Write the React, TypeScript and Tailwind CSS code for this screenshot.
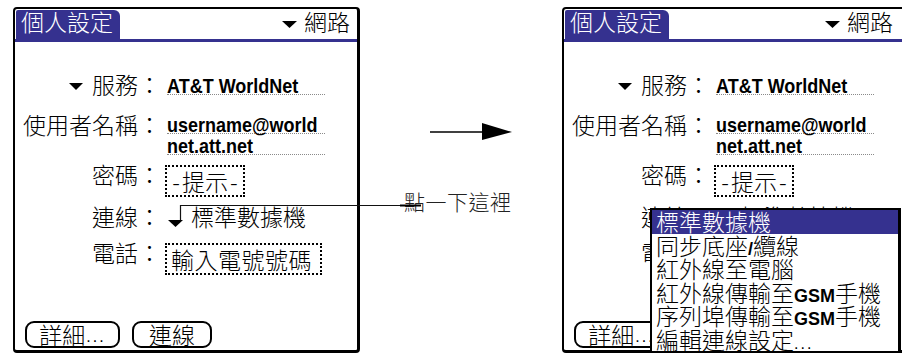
import React from "react";

function Tri({ className }: { className?: string }) {
  return (
    <svg width="14" height="7" viewBox="0 0 14 7" className={"shrink-0 " + (className ?? "")}>
      <polygon points="0,0 14,0 7,7" fill="#000" />
    </svg>
  );
}

const latin = "font-['Liberation_Sans',sans-serif] font-bold text-[18px]";

function Val({ children }: { children: React.ReactNode }) {
  return <span className="inline-block origin-bottom scale-y-[1.15] translate-y-[1px]">{children}</span>;
}

function Screen({ right }: { right?: boolean }) {
  return (
    <div className="relative shrink-0 w-[347px] h-[346px] border-l-2 border-t-2 border-r-[3px] border-b-[3px] border-black rounded-[4px] flex flex-col text-[23px] leading-[23px] font-light text-black bg-white">
      {/* title bar */}
      <div className={"flex h-[33px] border-b-[3px] border-[#35318f] " + (right ? "pr-[13px]" : "pr-[7px]")}>
        <div className="ml-[1px] mt-[1px] w-[104px] h-[29px] bg-[#35318f] rounded-tr-[6px] rounded-tl-[2px] pl-[5px] text-white whitespace-nowrap">
          個人設定
        </div>
        <div className="ml-auto mt-[1px] flex items-start">
          <svg width="15" height="7" viewBox="0 0 15 7" className="mt-[11px] mr-[7px]">
            <polygon points="0,0 15,0 7.5,7" fill="#000" />
          </svg>
          <span>網路</span>
        </div>
      </div>

      {/* body */}
      <div className="flex flex-col mt-[31px]">
        {/* 服務 */}
        <div className="flex h-[40px]">
          <div className="w-[146px] shrink-0 flex justify-end items-start">
            <Tri className="mt-[10px] mr-[9px]" />
            <span>服務：</span>
          </div>
          <div className="ml-[6px] w-[158px]">
            <div className={"mt-[5px] h-[17px] leading-[17px] border-b border-dotted border-[#8a8a8a] whitespace-nowrap " + latin}>
              <Val>AT&amp;T WorldNet</Val>
            </div>
          </div>
        </div>

        {/* 使用者名稱 */}
        <div className="flex h-[50px]">
          <div className="w-[146px] shrink-0 flex justify-end">
            <span className="whitespace-nowrap">使用者名稱：</span>
          </div>
          <div className="ml-[6px] w-[158px]">
            <div className={"mt-[4px] h-[17px] leading-[17px] border-b border-dotted border-[#8a8a8a] whitespace-nowrap " + latin}>
              <Val>username@world</Val>
            </div>
            <div className={"mt-[4px] h-[17px] leading-[17px] border-b border-dotted border-[#8a8a8a] whitespace-nowrap " + latin}>
              <Val>net.att.net</Val>
            </div>
          </div>
        </div>

        {/* 密碼 */}
        <div className="flex h-[42px]">
          <div className="w-[146px] shrink-0 flex justify-end">
            <span>密碼：</span>
          </div>
          <div className="ml-[4px] mt-[2px] w-[80px] h-[32px] border-2 border-dotted border-black flex items-center justify-center whitespace-nowrap">
            <span>-</span>
            <span className="mx-[2px]">提示</span>
            <span>-</span>
          </div>
        </div>

        {/* 連線 */}
        <div className="flex h-[36px]">
          <div className="w-[146px] shrink-0 flex justify-end">
            <span>連線：</span>
          </div>
          <div className="ml-[7px] flex items-start">
            <svg width="15" height="7" viewBox="0 0 15 7" className="mt-[15px]">
              <polygon points="0,0 15,0 7.5,7" fill="#000" />
            </svg>
            <span className="ml-[8px] whitespace-nowrap">標準數據機</span>
          </div>
        </div>

        {/* 電話 */}
        <div className="flex h-[36px]">
          <div className="w-[146px] shrink-0 flex justify-end">
            <span>電話：</span>
          </div>
          <div className="ml-[4px] mt-[2px] w-[157px] h-[32px] border-2 border-dotted border-black flex items-center pl-[4px] whitespace-nowrap tracking-[0.5px]">
            輸入電號號碼
          </div>
        </div>
      </div>

      {/* buttons */}
      <div className="mt-auto mb-[2px] ml-[10px] flex gap-[12px]">
        <div className="w-[95px] h-[27px] border-2 border-black rounded-[9px] flex items-center justify-center whitespace-nowrap">
          <span>詳細</span>
          <span className="font-['Liberation_Sans',sans-serif] text-[16px] tracking-[2px] ml-[1px] mt-[4px]">...</span>
        </div>
        <div className="w-[80px] h-[27px] border-2 border-black rounded-[9px] flex items-center justify-center">
          連線
        </div>
      </div>

      {right && (
        <div className="absolute left-[86px] top-[199px] w-[251px] h-[145px] bg-white border-2 border-black border-r-[3px] flex flex-col">
          <div className="h-[23.5px] leading-[23.5px] bg-[#35318f] text-white pl-[4px] whitespace-nowrap">標準數據機</div>
          <div className="h-[23.5px] leading-[23.5px] pl-[4px] whitespace-nowrap">
            同步底座<span className={latin + " leading-none"}>/</span>纜線
          </div>
          <div className="h-[23.5px] leading-[23.5px] pl-[4px] whitespace-nowrap">紅外線至電腦</div>
          <div className="h-[23.5px] leading-[23.5px] pl-[4px] whitespace-nowrap">
            紅外線傳輸至<span className={latin + " leading-none"}>GSM</span>手機
          </div>
          <div className="h-[23.5px] leading-[23.5px] pl-[4px] whitespace-nowrap">
            序列埠傳輸至<span className={latin + " leading-none"}>GSM</span>手機
          </div>
          <div className="h-[23.5px] leading-[23.5px] pl-[4px] whitespace-nowrap">
            編輯連線設定<span className="font-['Liberation_Sans',sans-serif] text-[16px] tracking-[2px] leading-none">...</span>
          </div>
        </div>
      )}
    </div>
  );
}

export default function App() {
  return (
    <div className="relative w-[902px] h-[356px] overflow-hidden bg-white flex pl-[13px] pt-[7px] font-['Noto_Sans_CJK_TC',sans-serif]">
      <Screen />
      <div className="w-[202px] shrink-0 flex flex-col">
        <svg width="82" height="17" viewBox="0 0 82 17" className="mt-[116px] ml-[70px]">
          <line x1="0" y1="9" x2="53" y2="9" stroke="#000" strokeWidth="1.5" />
          <polygon points="52,0 82,9 52,17" fill="#000" />
        </svg>
        <div className="mt-[51px] ml-[44px] text-[21px] leading-[21px] font-light text-[#222] whitespace-nowrap tracking-[0.5px]">
          點一下這裡
        </div>
      </div>
      <Screen right />
      <svg
        className="absolute left-0 top-0 pointer-events-none"
        width="902"
        height="356"
        viewBox="0 0 902 356"
      >
        <path d="M180.5 220 V205.5 H421" fill="none" stroke="#111" strokeWidth="1.2" />
        <path d="M400 205.5 H421" fill="none" stroke="#000" strokeWidth="2" />
      </svg>
    </div>
  );
}
